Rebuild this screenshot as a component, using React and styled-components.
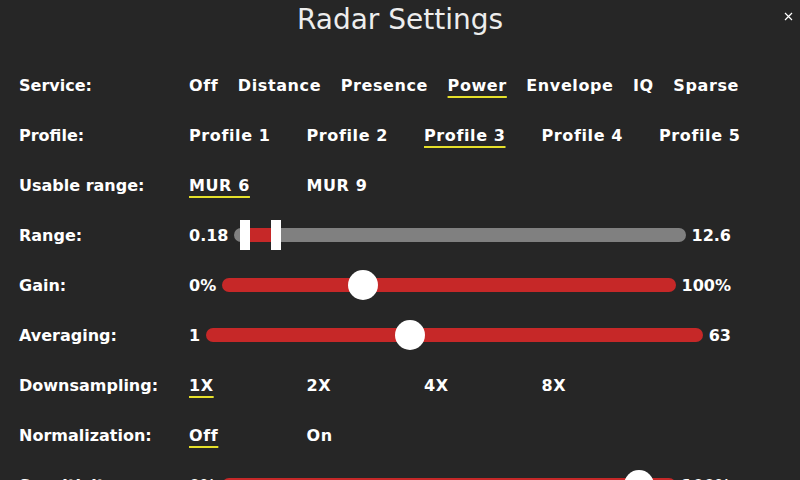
import React from "react";
import styled, { createGlobalStyle } from "styled-components";

const GlobalStyle = createGlobalStyle`
  html, body {
    margin: 0;
    padding: 0;
    width: 800px;
    height: 480px;
    overflow: hidden;
    background-color: #262626;
  }
`;

const Screen = styled.div`
  position: relative;
  width: 800px;
  height: 480px;
  overflow: hidden;
  background-color: #262626;
  color: #fff;
  font-family: "DejaVu Sans", "Liberation Sans", sans-serif;
`;

const Header = styled.div`
  height: 40px;
  display: flex;
  align-items: center;
  justify-content: center;
`;

const Title = styled.h1`
  margin: 0;
  font-size: 28px;
  font-weight: normal;
  color: #ededed;
  line-height: 40px;
`;

const CloseButton = styled.div`
  position: absolute;
  top: 12px;
  right: 7px;
  width: 9px;
  height: 9px;
  display: flex;
`;

const List = styled.div`
  padding: 20px 0 0 19px;
  display: flex;
  flex-direction: column;
`;

const Row = styled.div`
  height: 50px;
  display: flex;
  align-items: center;
`;

const Label = styled.div`
  width: 170px;
  flex-shrink: 0;
  font-size: 16px;
  font-weight: bold;
`;

const OptionGrid = styled.div`
  display: grid;
  grid-template-columns: repeat(5, 117.5px);
`;

const OptionSpread = styled.div`
  width: 550px;
  display: flex;
  justify-content: space-between;
`;

const Option = styled.span`
  justify-self: start;
  font-size: 16px;
  font-weight: bold;
  letter-spacing: 0.6px;
  text-decoration: ${(p) => (p.$active ? "underline" : "none")};
  text-decoration-color: #e6e02a;
  text-decoration-thickness: 1.5px;
  text-underline-offset: 5px;
`;

const SliderBox = styled.div`
  width: 542px;
  display: flex;
  align-items: center;
  gap: 6px;
`;

const EndValue = styled.span`
  font-size: 16px;
  font-weight: bold;
  white-space: nowrap;
`;

const Track = styled.div`
  position: relative;
  flex: 1;
  height: 14px;
  border-radius: 7px;
  background-color: ${(p) => (p.$dual ? "#808080" : "#c62828")};
`;

const Fill = styled.div`
  position: absolute;
  top: 0;
  bottom: 0;
  background-color: #c62828;
`;

const Knob = styled.div`
  position: absolute;
  top: 50%;
  width: 30px;
  height: 30px;
  margin-left: -15px;
  margin-top: -15px;
  border-radius: 50%;
  background-color: #fff;
`;

const Handle = styled.div`
  position: absolute;
  top: 50%;
  width: 10px;
  height: 30px;
  margin-left: -5px;
  margin-top: -15px;
  background-color: #fff;
`;

function Options({ items, active, spread }) {
  const Wrap = spread ? OptionSpread : OptionGrid;
  return (
    <Wrap>
      {items.map((it) => (
        <Option key={it} $active={it === active}>
          {it}
        </Option>
      ))}
    </Wrap>
  );
}

function Slider({ min, max, pos }) {
  return (
    <SliderBox>
      <EndValue>{min}</EndValue>
      <Track>
        <Knob style={{ left: pos + "%" }} />
      </Track>
      <EndValue>{max}</EndValue>
    </SliderBox>
  );
}

function RangeSlider({ min, max, lo, hi }) {
  return (
    <SliderBox>
      <EndValue>{min}</EndValue>
      <Track $dual>
        <Fill style={{ left: lo + "%", width: hi - lo + "%" }} />
        <Handle style={{ left: lo + "%" }} />
        <Handle style={{ left: hi + "%" }} />
      </Track>
      <EndValue>{max}</EndValue>
    </SliderBox>
  );
}

export default function App() {
  return (
    <>
      <GlobalStyle />
      <Screen>
        <Header>
          <Title>Radar Settings</Title>
        </Header>
        <CloseButton>
          <svg width="9" height="9" viewBox="0 0 9 9">
            <path d="M1 1 L8 8 M8 1 L1 8" stroke="#fff" strokeWidth="1.2" />
          </svg>
        </CloseButton>

        <List>
          <Row>
            <Label>Service:</Label>
            <Options
              spread
              items={["Off", "Distance", "Presence", "Power", "Envelope", "IQ", "Sparse"]}
              active="Power"
            />
          </Row>
          <Row>
            <Label>Profile:</Label>
            <Options
              items={["Profile 1", "Profile 2", "Profile 3", "Profile 4", "Profile 5"]}
              active="Profile 3"
            />
          </Row>
          <Row>
            <Label>Usable range:</Label>
            <Options items={["MUR 6", "MUR 9"]} active="MUR 6" />
          </Row>
          <Row>
            <Label>Range:</Label>
            <RangeSlider min="0.18" max="12.6" lo={2.4} hi={9.2} />
          </Row>
          <Row>
            <Label>Gain:</Label>
            <Slider min="0%" max="100%" pos={31} />
          </Row>
          <Row>
            <Label>Averaging:</Label>
            <Slider min="1" max="63" pos={41} />
          </Row>
          <Row>
            <Label>Downsampling:</Label>
            <Options items={["1X", "2X", "4X", "8X"]} active="1X" />
          </Row>
          <Row>
            <Label>Normalization:</Label>
            <Options items={["Off", "On"]} active="Off" />
          </Row>
          <Row>
            <Label>Sensitivity:</Label>
            <Slider min="0%" max="100%" pos={92} />
          </Row>
        </List>
      </Screen>
    </>
  );
}
